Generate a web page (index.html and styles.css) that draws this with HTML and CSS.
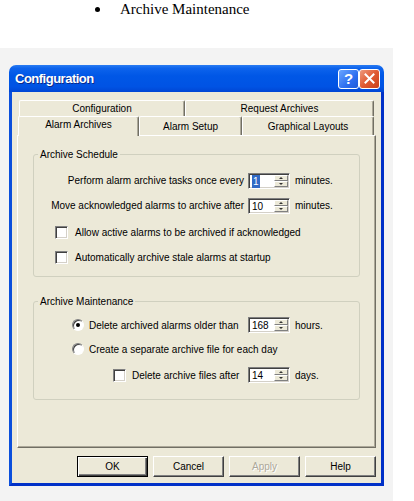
FILE: index.html
```html
<!DOCTYPE html>
<html lang="en">
<head>
    <meta charset="UTF-8">
    <title>Configuration</title>
    <link rel="stylesheet" href="styles.css">
</head>
<body>
    <div class="doc-item"><span class="bullet"></span>Archive Maintenance</div>

    <div class="shot">
        <div class="dialog">
            <div class="titlebar">
                <span class="title">Configuration</span>
                <div class="caption-btns">
                    <span class="cap-btn help">?</span>
                    <span class="cap-btn close">
                        <svg width="11" height="11" viewBox="0 0 11 11"><path d="M1.5 1.5 L9.5 9.5 M9.5 1.5 L1.5 9.5" stroke="#fff" stroke-width="2" stroke-linecap="square"/></svg>
                    </span>
                </div>
            </div>

            <div class="dlg-body">
                <!-- two rows of tabs, selected row in front -->
                <div class="tab-row back">
                    <div class="tab tab-config">Configuration</div>
                    <div class="tab tab-request">Request Archives</div>
                </div>
                <div class="tab-row front">
                    <div class="tab tab-alarm active">Alarm Archives</div>
                    <div class="tab tab-setup">Alarm Setup</div>
                    <div class="tab tab-layouts">Graphical Layouts</div>
                </div>

                <div class="panel">
                    <fieldset class="group sched">
                        <legend>Archive Schedule</legend>
                        <div class="row">
                            <span class="lbl-right">Perform alarm archive tasks once every</span>
                            <span class="spin"><span class="spin-val"><span class="sel">1</span></span><span class="spin-btns"><span class="sb up"></span><span class="sb down"></span></span></span>
                            <span class="unit">minutes.</span>
                        </div>
                        <div class="row">
                            <span class="lbl-right">Move acknowledged alarms to archive after</span>
                            <span class="spin"><span class="spin-val">10</span><span class="spin-btns"><span class="sb up"></span><span class="sb down"></span></span></span>
                            <span class="unit">minutes.</span>
                        </div>
                        <div class="row check-row spaced">
                            <span class="check"></span>
                            <span class="check-lbl">Allow active alarms to be archived if acknowledged</span>
                        </div>
                        <div class="row check-row">
                            <span class="check"></span>
                            <span class="check-lbl">Automatically archive stale alarms at startup</span>
                        </div>
                    </fieldset>

                    <fieldset class="group maint">
                        <legend>Archive Maintenance</legend>
                        <div class="row radio-row">
                            <span class="radio on"></span>
                            <span class="radio-lbl">Delete archived alarms older than</span>
                            <span class="spin"><span class="spin-val">168</span><span class="spin-btns"><span class="sb up"></span><span class="sb down"></span></span></span>
                            <span class="unit">hours.</span>
                        </div>
                        <div class="row radio-row">
                            <span class="radio"></span>
                            <span class="radio-lbl">Create a separate archive file for each day</span>
                        </div>
                        <div class="row sub-row spaced">
                            <span class="check"></span>
                            <span class="sub-lbl">Delete archive files after</span>
                            <span class="spin"><span class="spin-val">14</span><span class="spin-btns"><span class="sb up"></span><span class="sb down"></span></span></span>
                            <span class="unit">days.</span>
                        </div>
                    </fieldset>
                </div>

                <div class="buttons">
                    <button class="btn default">OK</button>
                    <button class="btn">Cancel</button>
                    <button class="btn disabled">Apply</button>
                    <button class="btn">Help</button>
                </div>
            </div>
        </div>
    </div>
</body>
</html>
```

FILE: styles.css
```css
* {
    box-sizing: border-box;
}
body {
    margin: 0;
    background-color: #ffffff;
    font-family: "Liberation Sans", Arial, sans-serif;
    font-size: 10px;
    color: #000;
}
.doc-item {
    display: flex;
    height: 48px;
    padding-left: 95px;
    font-family: "Liberation Serif", "Times New Roman", serif;
    font-size: 15px;
    line-height: 18px;
}
.bullet {
    display: flex;
    align-items: center;
    width: 25px;
    height: 18px;
}
.bullet::before {
    content: "";
    width: 5px;
    height: 5px;
    border-radius: 50%;
    background-color: #000;
}
.shot {
    width: 393px;
    height: 453px;
    padding: 17px 0 0 9px;
    background-color: #f3f3f3;
}
.dialog {
    width: 375px;
}
.titlebar {
    display: flex;
    align-items: center;
    justify-content: space-between;
    height: 27px;
    padding: 0 4px 0 6px;
    border-radius: 7px 7px 0 0;
    background: linear-gradient(#2a7cf2 0%, #0d63ec 12%, #0057e6 40%, #0053e4 80%, #0046d4 100%);
}
.title {
    color: #fff;
    font-weight: bold;
    font-size: 13px;
    letter-spacing: -0.5px;
    text-shadow: 1px 1px #0a2a8a;
}
.caption-btns {
    display: flex;
    gap: 0;
}
.cap-btn {
    display: flex;
    align-items: center;
    justify-content: center;
    width: 21px;
    height: 20px;
    border: 1px solid #fff;
    border-radius: 3px;
    color: #fff;
    font-weight: bold;
    font-size: 15px;
}
.help {
    background: linear-gradient(135deg, #6aa6ff, #2e6ff0 60%, #1f5ad8);
}
.close {
    background: linear-gradient(135deg, #ee9a7f, #e05a33 50%, #c8401a);
}
.dlg-body {
    padding: 8px 5px 6px 5px;
    background-color: #ece9d8;
    border: 3px solid #0b4fdc;
    border-top: none;
    border-right-color: #0030c8;
    border-bottom-color: #0030c8;
}
.tab-row {
    display: flex;
}
.tab-row.back {
    margin-left: 2px;
    height: 16px;
}
.tab-row.front {
    margin-left: 1px;
    height: 19px;
}
.tab {
    display: flex;
    align-items: center;
    justify-content: center;
    height: 100%;
    border-top: 1px solid #fff;
    border-left: 1px solid #fff;
    border-right: 1px solid #716f64;
    border-radius: 2px 2px 0 0;
    box-shadow: inset -1px 0 #aca899;
    background-color: #ece9d8;
}
.tab-config { width: 166px; }
.tab-request { width: 189px; }
.tab-alarm { width: 121px; }
.tab-setup { width: 103px; }
.tab-layouts { width: 132px; }
.tab.active {
    position: relative;
    z-index: 1;
    height: 20px;
    padding-bottom: 4px;
}
.panel {
    height: 313px;
    padding: 12px 15px 0 15px;
    border: 1px solid;
    border-color: #fff #716f64 #716f64 #fff;
    box-shadow: inset -1px -1px #aca899;
}
.group {
    margin: 0;
    min-width: 0;
    padding: 7px 0 6px 0;
    border: 1px solid #d0d0bf;
    border-radius: 3px;
}
.group legend {
    margin-left: 4px;
    padding: 0 2px;
    line-height: 13px;
}
.group.maint {
    margin-top: 18px;
    padding: 5px 0 12px 0;
}
.row {
    display: flex;
    align-items: center;
    height: 25px;
}
.maint .row {
    height: 24px;
}
.row.spaced {
    margin-top: 2px;
}
.lbl-right {
    width: 210px;
    text-align: right;
}
.spin {
    display: flex;
    width: 42px;
    height: 16px;
    margin-left: 4px;
    border: 1px solid;
    border-color: #808080 #fff #fff #808080;
    box-shadow: inset 1px 1px #404040, inset -1px -1px #d4d0c8;
    background-color: #fff;
}
.spin-val {
    flex: 1;
    padding: 1px 0 0 3px;
    line-height: 13px;
}
.sel {
    display: inline-block;
    padding: 0 1px;
    background-color: #316ac5;
    color: #fff;
}
.spin-btns {
    display: flex;
    flex-direction: column;
    width: 15px;
    padding: 1px 1px 1px 0;
}
.sb {
    position: relative;
    flex: 1;
    background-color: #ece9d8;
    border: 1px solid;
    border-color: #fff #808080 #808080 #fff;
}
.sb::after {
    content: "";
    position: absolute;
    left: 4px;
    top: 1px;
    border-left: 2px solid transparent;
    border-right: 2px solid transparent;
}
.sb.up::after {
    border-bottom: 2px solid #333;
}
.sb.down::after {
    border-top: 2px solid #333;
}
.unit {
    margin-left: 5px;
}
.check-row {
    padding-left: 21px;
}
.check {
    width: 13px;
    height: 13px;
    flex-shrink: 0;
    border: 1px solid;
    border-color: #808080 #fff #fff #808080;
    box-shadow: inset 1px 1px #404040, inset -1px -1px #d4d0c8;
    background-color: #fff;
}
.check-lbl {
    margin-left: 7px;
}
.radio-row {
    padding-left: 38px;
}
.radio {
    display: flex;
    align-items: center;
    justify-content: center;
    width: 12px;
    height: 12px;
    flex-shrink: 0;
    border-radius: 50%;
    border: 1px solid;
    border-color: #808080 #fff #fff #808080;
    box-shadow: inset 1px 1px #404040;
    background-color: #fff;
}
.radio.on::after {
    content: "";
    width: 4px;
    height: 4px;
    border-radius: 50%;
    background-color: #000;
}
.radio-lbl {
    margin-left: 5px;
    width: 155px;
    white-space: nowrap;
}
.sub-row {
    padding-left: 79px;
}
.sub-lbl {
    margin-left: 6px;
    width: 112px;
    white-space: nowrap;
}
.buttons {
    display: flex;
    justify-content: flex-end;
    gap: 5px;
    margin-top: 8px;
}
.btn {
    width: 71px;
    height: 21px;
    padding: 0;
    font-family: "Liberation Sans", Arial, sans-serif;
    font-size: 10px;
    color: #000;
    background-color: #ece9d8;
    border: 1px solid;
    border-color: #fff #404040 #404040 #fff;
    box-shadow: inset -1px -1px #808080;
}
.btn.default {
    border: 1px solid #000;
    box-shadow: inset 1px 1px #fff, inset -1px -1px #404040, inset -2px -2px #808080;
}
.btn.disabled {
    color: #aca899;
    text-shadow: 1px 1px #fff;
}
```
